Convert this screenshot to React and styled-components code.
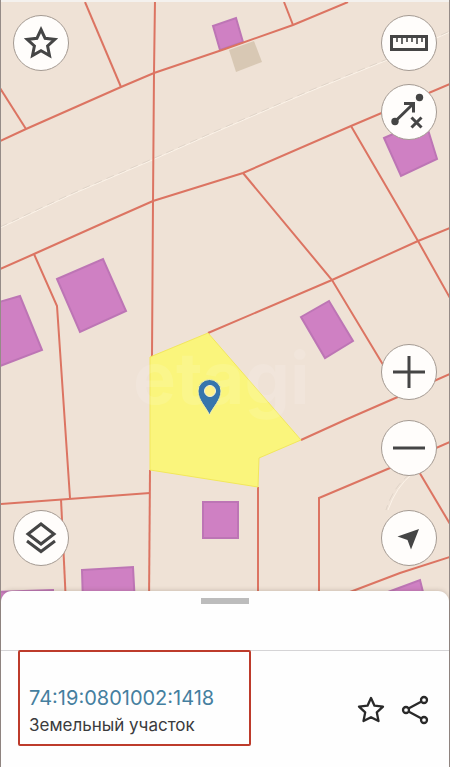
import React from "react";
import styled, { createGlobalStyle } from "styled-components";

const GlobalStyle = createGlobalStyle`
  * { box-sizing: border-box; }
  body { margin: 0; background: #f4f1ee; font-family: Inter, "Noto Sans", sans-serif; }
`;

const Screen = styled.div`
  display: flex;
  flex-direction: column;
  min-height: 100vh;
  padding-top: 2px;
  border: solid #958b87;
  border-width: 0 1px;
`;

const MapArea = styled.main`
  position: relative;
  flex: 1;
  display: flex;
  justify-content: space-between;
  min-height: 480px;
  padding: 13px 12px 36px;
  margin-bottom: -11px;
  background: #efe2d6;
  overflow: hidden;
`;

const MapCanvas = styled.svg`
  position: absolute;
  inset: 0;
  width: 100%;
  height: 100%;
`;

const Controls = styled.div`
  position: relative;
  display: flex;
  flex-direction: column;
  justify-content: space-between;
`;

const ControlGroup = styled.div`
  display: flex;
  flex-direction: column;
  gap: ${(p) => p.$gap}px;
`;

const RoundButton = styled.button`
  display: grid;
  place-items: center;
  width: 56px;
  height: 56px;
  padding: 0;
  border: 1px solid #a49a92;
  border-radius: 50%;
  background: #fffdfb;
  color: #454545;
  cursor: pointer;
`;

const Glyph = styled.svg`
  display: block;
  width: ${(p) => p.$size || 40}px;
  height: ${(p) => p.$size || 40}px;
  fill: none;
  stroke: currentColor;
  stroke-width: 3;
`;

const Sheet = styled.section`
  position: relative;
  min-height: 176px;
  border-radius: 11px 11px 0 0;
  background: #fefefe;
  box-shadow: 0 -1px 4px rgba(80, 60, 50, 0.2);
`;

const SheetTop = styled.div`
  display: flex;
  justify-content: center;
  height: 60px;
  padding-top: 7px;
  border-bottom: 1px solid #d5d4d6;
`;

const Handle = styled.button`
  width: 48px;
  height: 6px;
  padding: 0;
  border: 0;
  background: #bcbcbc;
  cursor: grab;
`;

const ResultRow = styled.div`
  display: flex;
  align-items: flex-start;
  justify-content: space-between;
  padding: 0 17px 20px;
`;

const ResultCard = styled.div`
  flex: 0 1 233px;
  margin-top: -1px;
  padding: 32px 9px 6px;
  border: 2px solid #bd3b2b;
  border-radius: 2px;
`;

const ParcelLink = styled.a`
  display: block;
  font-size: 20px;
  line-height: 28px;
  color: #457f9f;
  text-decoration: none;
  white-space: nowrap;
`;

const ParcelType = styled.div`
  font-size: 17px;
  line-height: 26px;
  color: #3b3b3d;
  white-space: nowrap;
`;

const Actions = styled.div`
  display: flex;
  gap: 13px;
  padding-top: 43px;
`;

const IconButton = styled.button`
  display: grid;
  place-items: center;
  width: 32px;
  height: 32px;
  padding: 0;
  border: 0;
  background: none;
  color: #292929;
  cursor: pointer;
`;

const Watermark = styled.text`
  font-family: Inter, sans-serif;
  font-size: 72px;
  font-weight: 700;
  fill: #fff;
  fill-opacity: 0.12;
`;

const parcels = [
  "M0 141L26 129L121 87L154 73L225 49L293 25L348 2",
  "M0 88L26 129",
  "M85 2L121 87",
  "M284 2L293 25",
  "M155 0L154 73L153 201L152 357",
  "M150 470L149 604",
  "M0 269L34 254L110 220L153 201L243 173L351 126L450 84",
  "M34 254L57 306L70 498",
  "M0 504L150 493",
  "M61 499L66 604",
  "M243 173L332 280L382 363L402 396",
  "M351 126L418 241L450 298",
  "M208 333L332 280L418 241L450 228",
  "M301 440L345 420L400 396L450 374",
  "M319 604L319 498L390 468L450 442",
  "M412 460L450 524",
  "M350 592L400 573L450 557",
  "M258 487V604",
];

const buildings = [
  "213,26 236,18 243,42 220,50",
  "384,138 425,120 437,159 401,176",
  "57,279 103,259 126,311 80,332",
  "-8,304 20,296 42,350 -8,369",
  "301,317 329,301 353,341 325,358",
  "203,502 238,502 238,538 203,538",
  "82,570 133,567 135,604 83,604",
  "388,592 420,580 426,604 380,604",
  "-5,592 53,590 54,604 -5,604",
];

const starPath =
  "M20 6.5L24.1 15.3L33.8 16.4L26.6 23L28.5 32.5L20 27.7L11.5 32.5L13.4 23L6.2 16.4L15.9 15.3Z";

function ParcelMap() {
  return (
    <MapCanvas viewBox="1 2 448 600" preserveAspectRatio="xMidYMid slice" aria-hidden="true">
      <g fill="none" stroke="#fff8ee" strokeWidth="1" strokeOpacity="0.8">
        <path d="M0 228L75 193L150 161L225 128L311 91L385 61L450 32" />
        <path d="M412 474Q396 487 388 510" />
      </g>
      <g fill="none" stroke="#c9beb4" strokeWidth="1" strokeDasharray="8 5" strokeOpacity="0.4">
        <path d="M0 227L75 192L150 160L225 127L311 90L385 60L450 31" />
        <path d="M410 474Q393 487 386 510" />
      </g>
      <polygon points="229,50 254,41 262,62 236,72" fill="#d8c8b4" />
      <g fill="#cf80c3" stroke="#bd75b5" strokeWidth="2">
        {buildings.map((points) => (
          <polygon key={points} points={points} />
        ))}
      </g>
      <g fill="none" stroke="#dc7462" strokeWidth="2">
        {parcels.map((d) => (
          <path key={d} d={d} />
        ))}
      </g>
      <polygon
        points="150,357 208,333 301,440 259,458 258,487 150,470"
        fill="#faf57c"
        stroke="#f2e75c"
      />
      <Watermark x="133" y="404">etagi</Watermark>
      <path
        d="M209.5 415C206 407 198 400 198 391A11.5 11.5 0 0 1 221 391C221 400 213 407 209.5 415Z"
        fill="#3675ac"
        stroke="#f4f3aa"
        strokeWidth="1"
      />
      <circle cx="210" cy="391" r="5.5" fill="#fff28a" stroke="#f6f2d6" strokeWidth="1" />
    </MapCanvas>
  );
}

export default function App() {
  return (
    <>
      <GlobalStyle />
      <Screen>
        <MapArea>
          <ParcelMap />
          <Controls>
            <RoundButton aria-label="Избранное">
              <Glyph viewBox="0 0 40 40"><path d={starPath} /></Glyph>
            </RoundButton>
            <RoundButton aria-label="Слои">
              <Glyph viewBox="0 0 40 40">
                <path d="M20 6L33 16L20 26L7 16ZM6 23L20 33.5L34 23" />
              </Glyph>
            </RoundButton>
          </Controls>
          <Controls>
            <ControlGroup $gap={13}>
              <RoundButton aria-label="Линейка">
                <Glyph viewBox="0 0 40 40">
                  <path d="M2.5 13.5H37.5V26.5H2.5Z" />
                  <path d="M8 14V19M13 14V21M18 14V19M23 14V19M28 14V21M33 14V19" strokeWidth="1.6" />
                </Glyph>
              </RoundButton>
              <RoundButton aria-label="Сбросить маршрут">
                <Glyph viewBox="0 0 40 40">
                  <circle cx="6" cy="29.5" r="3.7" fill="currentColor" stroke="none" />
                  <circle cx="30.5" cy="5.5" r="3.7" fill="currentColor" stroke="none" />
                  <path d="M6 29.5L24 12M15 11.5H24.5V20.5" />
                  <path d="M22.5 25.5L32.5 35.5M32.5 25.5L22.5 35.5" />
                </Glyph>
              </RoundButton>
            </ControlGroup>
            <ControlGroup $gap={34}>
              <ControlGroup $gap={20}>
                <RoundButton aria-label="Приблизить">
                  <Glyph viewBox="0 0 40 40"><path d="M4 20H36M20 4V36" /></Glyph>
                </RoundButton>
                <RoundButton aria-label="Отдалить">
                  <Glyph viewBox="0 0 40 40"><path d="M4 20H36" /></Glyph>
                </RoundButton>
              </ControlGroup>
              <RoundButton aria-label="Моё местоположение">
                <Glyph viewBox="0 0 40 40">
                  <path d="M30 11L8.5 18.5L18.5 22L22 31.5Z" fill="currentColor" stroke="none" />
                </Glyph>
              </RoundButton>
            </ControlGroup>
          </Controls>
        </MapArea>
        <Sheet>
          <SheetTop>
            <Handle aria-label="Развернуть панель" />
          </SheetTop>
          <ResultRow>
            <ResultCard>
              <ParcelLink href="#parcel">74:19:0801002:1418</ParcelLink>
              <ParcelType>Земельный участок</ParcelType>
            </ResultCard>
            <Actions>
              <IconButton aria-label="Добавить в избранное">
                <Glyph $size={32} viewBox="0 0 32 32">
                  <path
                    d="M16 4L19.5 11.7L28 12.6L21.8 18.4L23.5 27L16 23.2L8.5 27L10.2 18.4L4 12.6L12.5 11.7Z"
                    strokeWidth="2.3"
                    strokeLinejoin="round"
                  />
                </Glyph>
              </IconButton>
              <IconButton aria-label="Поделиться">
                <Glyph $size={32} viewBox="0 0 32 32">
                  <g strokeWidth="2.3">
                    <circle cx="6" cy="16" r="3" />
                    <circle cx="24" cy="6" r="3" />
                    <circle cx="24" cy="26" r="3" />
                    <path d="M8.5 14.5L21.5 7.5M8.5 17.5L21.5 24.5" />
                  </g>
                </Glyph>
              </IconButton>
            </Actions>
          </ResultRow>
        </Sheet>
      </Screen>
    </>
  );
}
